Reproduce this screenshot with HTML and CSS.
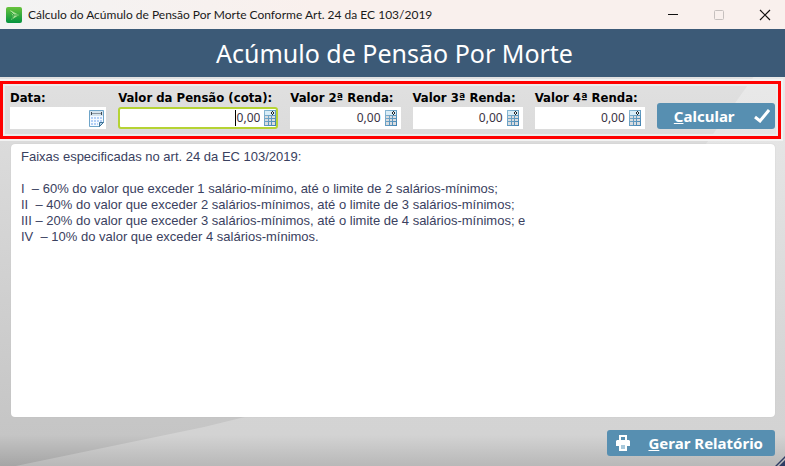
FILE: index.html
```html
<!DOCTYPE html>
<html lang="pt-BR">
<head>
  <meta charset="UTF-8">
  <meta name="viewport" content="width=device-width, initial-scale=1.0">
  <title>Cálculo do Acúmulo de Pensão Por Morte</title>
  <link rel="stylesheet" href="styles.css">
</head>
<body>
  <svg class="defs" width="0" height="0" aria-hidden="true">
    <defs>
      <linearGradient id="calcFundo" x1="0" y1="0" x2="1" y2="1">
        <stop offset="0" stop-color="#8dbbd5"/>
        <stop offset="1" stop-color="#3f80b0"/>
      </linearGradient>
      <linearGradient id="logoFundo" x1="0" y1="0" x2="0" y2="1">
        <stop offset="0" stop-color="#68c33c"/>
        <stop offset="1" stop-color="#03933f"/>
      </linearGradient>
    </defs>
    <symbol id="calculadora" viewBox="0 0 12 16">
      <rect width="12" height="16" fill="url(#calcFundo)"/>
      <rect x="1" y="1" width="10" height="4" fill="#d9edf7"/>
      <path d="M8 1h1v1H8zM7 2h1v2H7zM9 2h1v2H9zM8 4h1v1H8z" fill="#222"/>
      <path d="M1 6h3v2H1zM5 6h2v2H5zM8 6h3v2H8zM1 9h3v2H1zM5 9h2v2H5zM8 9h3v2H8zM1 12h3v3H1zM5 12h2v3H5zM8 12h3v3H8z" fill="#d9dcdf"/>
    </symbol>
  </svg>

  <header class="titlebar">
    <svg class="logo" width="16" height="16" viewBox="0 0 16 16" aria-hidden="true">
      <rect width="16" height="16" rx="2" fill="url(#logoFundo)"/>
      <path d="M4 3l9 5-8 5 2-4z" fill="#a7df93"/>
      <path d="M5 5l3 3-2 4M8 8h4" fill="none" stroke="#32a542"/>
    </svg>
    <span class="caption">Cálculo do Acúmulo de Pensão Por Morte Conforme Art. 24 da EC 103/2019</span>
    <div class="window-buttons">
      <button type="button" aria-label="Minimizar"><svg width="12" height="12"><path d="M1 5.500h10" stroke="#111"/></svg></button>
      <button type="button" aria-label="Maximizar" disabled><svg width="12" height="12"><rect x="1.500" y="1.500" width="9" height="9" rx="1" fill="none" stroke="#c6c0be"/></svg></button>
      <button type="button" aria-label="Fechar"><svg width="12" height="12"><path d="M1 1l10 10M11 1L1 11" stroke="#111" stroke-width="1.200"/></svg></button>
    </div>
  </header>
  <h1>Acúmulo de Pensão Por Morte</h1>

  <main>
    <form class="filtros">
      <div class="campo">
        <label for="data">Data:</label>
        <div class="caixa data">
          <input type="text" id="data">
          <button type="button" aria-label="Abrir calendário">
            <svg width="15" height="17" viewBox="0 0 15 17">
              <path d="M.5 .5h14v12l-4 4H.5z" fill="#f5faff" stroke="#6fa5c9"/>
              <path d="M1 1h13v5H1z" fill="#d5e3ec"/>
              <path d="M3 3.500h9" stroke="#8a949d"/>
              <path d="M2.500 2v3M12.500 2v3" stroke="#404a54"/>
              <path d="M2 8h11M2 11h11M2 14h7" stroke="#b3cff6" stroke-width="2" stroke-dasharray="2 1"/>
              <path d="M10.500 16.500v-4h4z" fill="#b5d7ec" stroke="#3f7296"/>
            </svg>
          </button>
        </div>
      </div>
      <div class="campo">
        <label for="pensao">Valor da Pensão (cota):</label>
        <div class="caixa ativa">
          <input type="text" id="pensao" value="0,00">
          <span class="cursor"></span>
          <button type="button" aria-label="Calculadora"><svg width="12" height="16"><use href="#calculadora"/></svg></button>
        </div>
      </div>
      <div class="campo">
        <label for="renda2">Valor 2ª Renda:</label>
        <div class="caixa">
          <input type="text" id="renda2" value="0,00">
          <button type="button" aria-label="Calculadora"><svg width="12" height="16"><use href="#calculadora"/></svg></button>
        </div>
      </div>
      <div class="campo">
        <label for="renda3">Valor 3ª Renda:</label>
        <div class="caixa">
          <input type="text" id="renda3" value="0,00">
          <button type="button" aria-label="Calculadora"><svg width="12" height="16"><use href="#calculadora"/></svg></button>
        </div>
      </div>
      <div class="campo">
        <label for="renda4">Valor 4ª Renda:</label>
        <div class="caixa">
          <input type="text" id="renda4" value="0,00">
          <button type="button" aria-label="Calculadora"><svg width="12" height="16"><use href="#calculadora"/></svg></button>
        </div>
      </div>
      <button type="button" class="botao calcular">
        <span><u>C</u>alcular</span>
        <svg width="16" height="14" viewBox="0 0 16 14" aria-hidden="true"><path d="M1 8l5 4L15 1" fill="none" stroke="#fff" stroke-width="3"/></svg>
      </button>
    </form>

    <textarea class="resultado" aria-label="Resultado" readonly>
Faixas especificadas no art. 24 da EC 103/2019:

I  – 60% do valor que exceder 1 salário-mínimo, até o limite de 2 salários-mínimos;
II  – 40% do valor que exceder 2 salários-mínimos, até o limite de 3 salários-mínimos;
III – 20% do valor que exceder 3 salários-mínimos, até o limite de 4 salários-mínimos; e
IV  – 10% do valor que exceder 4 salários-mínimos.</textarea>

    <footer>
      <button type="button" class="botao relatorio">
        <svg width="14" height="16" viewBox="0 0 14 16" aria-hidden="true">
          <path d="M3 0h8v5H3z" fill="#fff"/>
          <path d="M5 2h4v3H5z" fill="#578fb1"/>
          <path d="M1 5h12l1 1v5h-3v5H3v-5H0V6z" fill="#fff"/>
          <path d="M5 10h4v4H5z" fill="#a9c9db"/>
        </svg>
        <span><u>G</u>erar Relatório</span>
      </button>
    </footer>
    <svg class="alca" width="10" height="10" viewBox="0 0 10 10" aria-hidden="true">
      <path d="M0 10L10 0v2L2 10zM4 10l6-6v6z" fill="#2e3b63"/>
    </svg>
  </main>
</body>
</html>
```
FILE: styles.css
```css
* {
  box-sizing: border-box;
}
body {
  display: flex;
  flex-direction: column;
  min-height: 100vh;
  margin: 0;
  font-family: "Noto Sans", "Open Sans", sans-serif;
}
button {
  border: none;
  padding: 0;
  background: none;
}
.defs {
  position: absolute;
}
.titlebar {
  display: flex;
  align-items: center;
  height: 29px;
  padding: 0 6px;
  background: linear-gradient(to right, #f3f3f3, #f9f0ed 40%, #f9f0ed);
}
.caption {
  flex: 1;
  margin-left: 6px;
  font-family: Lato, sans-serif;
  font-size: 12px;
  line-height: 16px;
  color: #1a1a1a;
}
.window-buttons {
  display: flex;
  gap: 34px;
  padding: 0 8px;
}
.window-buttons button {
  display: flex;
}
h1 {
  margin: 0;
  padding-left: 4px;
  background: #3c5a77;
  color: #fff;
  font-size: 25px;
  font-weight: normal;
  line-height: 48px;
  text-align: center;
}
main {
  position: relative;
  z-index: 0;
  display: flex;
  flex: 1;
  flex-direction: column;
  padding-top: 4px;
  background: linear-gradient(to bottom, #e0e0e0, #dadada 20%, #c7c7c7 85%, #c5c5c5 92%, #a5a5a5);
}
/* faixa clara que cruza o fundo */
main::before {
  content: "";
  position: absolute;
  inset: 0;
  z-index: -1;
  background: linear-gradient(to bottom, #e9e9e9, #d4d4d4 80%, #d3d3d3 92%, #b8b8b8);
  clip-path: polygon(2% 100%, 26% 90%, 40% 83%, 60% 68%, 80% 40%, 90% 17%, 96% 0, 100% 0, 100% 100%);
}
.filtros {
  display: grid;
  grid-template-columns: 96fr 160fr 110fr 110fr 110fr 118fr;
  gap: 12px;
  align-items: end;
  margin-right: 4px;
  padding: 4px 3px 7px 7px;
  border: 3px solid #f00;
  outline: 2px solid #f2f2f2;
  box-shadow: inset 0 0 0 2px #ececec;
}
.campo {
  min-width: 0;
}
label {
  display: block;
  color: #000;
  font-family: "DejaVu Sans Condensed", "DejaVu Sans", sans-serif;
  font-size: 13px;
  font-weight: bold;
  line-height: 19px;
  white-space: nowrap;
}
.caixa {
  position: relative;
  display: flex;
  align-items: center;
  height: 22px;
  padding-right: 4px;
  background: #fff;
}
.caixa.data {
  padding-right: 2px;
}
.caixa.ativa {
  padding-right: 0;
  border: 2px solid #b5d334;
  border-radius: 3px;
}
.caixa input {
  flex: 1;
  min-width: 0;
  padding: 0 4px;
  border: none;
  outline: none;
  background: none;
  color: #3a3344;
  font-family: inherit;
  font-size: 12px;
  line-height: 16px;
  text-align: right;
}
.caixa button {
  display: flex;
}
.cursor {
  position: absolute;
  right: 40px;
  width: 1px;
  height: 16px;
  background: #000;
}
.botao {
  display: flex;
  align-items: center;
  height: 26px;
  border-radius: 3px;
  background: #578fb1;
  color: #fff;
  font-family: inherit;
  font-size: 15px;
  font-weight: bold;
}
.calcular {
  justify-content: space-between;
  padding: 0 5px 0 17px;
}
.resultado {
  flex: 1;
  margin: 5px 10px 0 11px;
  padding: 5px 10px;
  border: none;
  border-radius: 4px;
  outline: none;
  box-shadow: 0 0 1px #bbb;
  background: #fff;
  color: #3a4160;
  font-family: "Liberation Sans", Arial, sans-serif;
  font-size: 13px;
  line-height: 16px;
  resize: none;
}
footer {
  display: flex;
  justify-content: flex-end;
  padding: 13px 10px 10px;
}
.relatorio {
  gap: 18px;
  padding: 0 12px 0 9px;
}
.alca {
  position: absolute;
  right: 0;
  bottom: 0;
}
```
